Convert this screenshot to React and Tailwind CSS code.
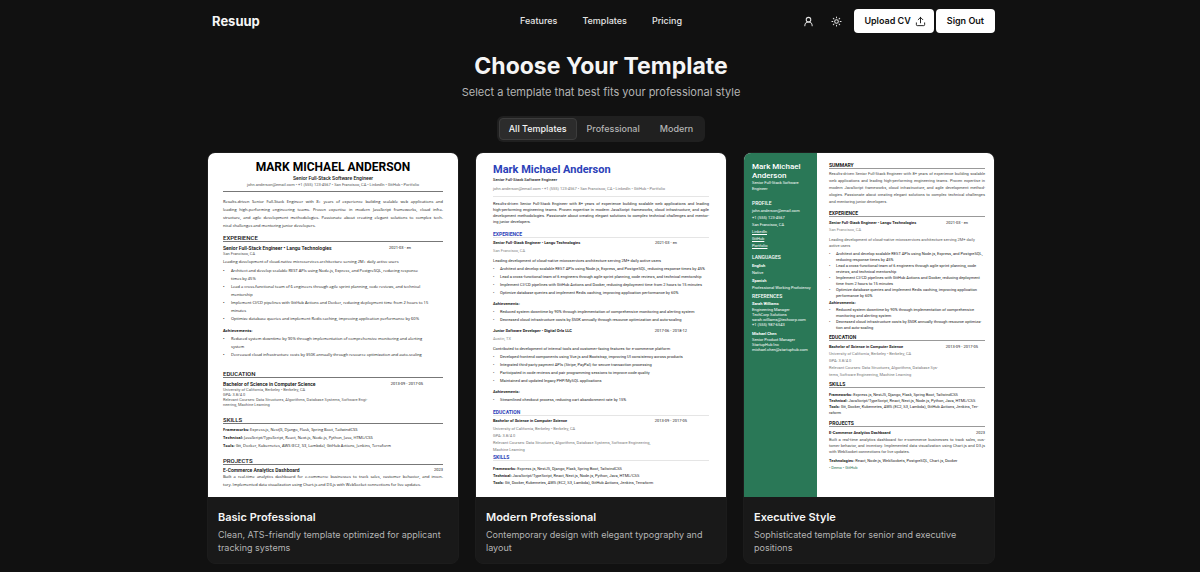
import { useState } from 'react';
import { Sun, Upload, UserRound } from 'lucide-react';

const tabs = ['All Templates', 'Professional', 'Modern'];

const skills = {
  frameworks: 'Express.js, NestJS, Django, Flask, Spring Boot, TailwindCSS',
  technical: 'JavaScript/TypeScript, React, Next.js, Node.js, Python, Java, HTML/CSS',
  tools: 'Git, Docker, Kubernetes, AWS (EC2, S3, Lambda), GitHub Actions, Jenkins, Terraform',
};

// one printed line per entry, every line but the last is set to the full measure
function Paragraph({ lines, className }) {
  return (
    <p className={className}>
      {lines.map((line, i) => (
        <span key={line} className={i < lines.length - 1 ? 'block whitespace-nowrap [text-align-last:justify]' : 'block whitespace-nowrap'}>
          {line}
        </span>
      ))}
    </p>
  );
}

function Lines({ lines, className }) {
  return (
    <div className={className}>
      {lines.map((line) => (
        <p key={line} className="whitespace-nowrap">{line}</p>
      ))}
    </div>
  );
}

function Bullets({ items, className, gap = 'w-[7px]' }) {
  return (
    <ul className={className}>
      {items.map((item) => (
        <li key={item[0]} className="flex">
          <span className={`shrink-0 ${gap}`}>•</span>
          <Lines lines={item} />
        </li>
      ))}
    </ul>
  );
}

function Skill({ label, children }) {
  return (
    <p className="whitespace-nowrap">
      <b className="font-bold">{label}:</b> {children}
    </p>
  );
}

function Entry({ title, date, className, titleClass = 'font-bold', right = 'pr-8' }) {
  return (
    <div className={`flex justify-between whitespace-nowrap font-['Roboto',sans-serif] ${className}`}>
      <h4 className={titleClass}>{title}</h4>
      <span className={right}>{date}</span>
    </div>
  );
}

function BasicResume() {
  const heading = "border-b border-[#777] text-[6px] leading-[6px] font-medium font-['Roboto',sans-serif]";
  const entryTitle = 'text-[5px] font-semibold';
  const muted = "text-[#555] font-['Roboto',sans-serif]";
  return (
    <div className="px-[15px] pt-[7px] text-[4px] leading-[8px] text-[#111] font-['Open_Sans',sans-serif]">
      <div className="border-b border-[#777] pb-[3px] text-center whitespace-nowrap font-['Roboto',sans-serif]">
        <h3 className="text-[12px] leading-[14px] font-bold text-black">MARK MICHAEL ANDERSON</h3>
        <p className="text-[5px] font-medium">Senior Full-Stack Software Engineer</p>
        <p className="leading-[6px] text-[#555]">john.anderson@email.com • +1 (555) 123-4567 • San Francisco, CA • LinkedIn • GitHub • Portfolio</p>
      </div>
      <Paragraph
        className="mt-[6px]"
        lines={[
          'Results-driven Senior Full-Stack Engineer with 8+ years of experience building scalable web applications and',
          'leading high-performing engineering teams. Proven expertise in modern JavaScript frameworks, cloud infra-',
          'structure, and agile development methodologies. Passionate about creating elegant solutions to complex tech-',
          'nical challenges and mentoring junior developers.',
        ]}
      />
      <h4 className={`mt-[5px] ${heading}`}>EXPERIENCE</h4>
      <Entry className="mt-[3px] leading-[6px]" titleClass={entryTitle} title="Senior Full-Stack Engineer • Langu Technologies" date="2021-03 - en" />
      <p className={`leading-[6px] ${muted}`}>San Francisco, CA</p>
      <p className="mt-px whitespace-nowrap">Leading development of cloud-native microservices architecture serving 2M+ daily active users</p>
      <Bullets
        className="mt-px"
        gap="w-2"
        items={[
          ['Architect and develop scalable REST APIs using Node.js, Express, and PostgreSQL, reducing response', 'times by 45%'],
          ['Lead a cross-functional team of 6 engineers through agile sprint planning, code reviews, and technical', 'mentorship'],
          ['Implement CI/CD pipelines with GitHub Actions and Docker, reducing deployment time from 2 hours to 15', 'minutes'],
          ['Optimize database queries and implement Redis caching, improving application performance by 60%'],
        ]}
      />
      <p className="mt-1 font-bold">Achievements:</p>
      <Bullets
        gap="w-2"
        items={[
          ['Reduced system downtime by 90% through implementation of comprehensive monitoring and alerting', 'system'],
          ['Decreased cloud infrastructure costs by $50K annually through resource optimization and auto-scaling'],
        ]}
      />
      <h4 className={`mt-3 ${heading}`}>EDUCATION</h4>
      <Entry className="mt-[3px] leading-[6px]" titleClass={entryTitle} right="pr-5" title="Bachelor of Science in Computer Science" date="2013-09 - 2017-05" />
      <Lines
        className={`leading-[5px] ${muted}`}
        lines={[
          'University of California, Berkeley • Berkeley, CA',
          'GPA: 3.8/4.0',
          'Relevant Courses: Data Structures, Algorithms, Database Systems, Software Engi-',
          'neering, Machine Learning',
        ]}
      />
      <h4 className={`mt-[10px] ${heading}`}>SKILLS</h4>
      <div className="mt-0.5">
        <Skill label="Frameworks">{skills.frameworks}</Skill>
        <Skill label="Technical">{skills.technical}</Skill>
        <Skill label="Tools">{skills.tools}</Skill>
      </div>
      <h4 className={`mt-2 ${heading}`}>PROJECTS</h4>
      <Entry className="mt-0.5 leading-[6px]" titleClass={entryTitle} right="" title="E-Commerce Analytics Dashboard" date="2023" />
      <Paragraph
        lines={[
          'Built a real-time analytics dashboard for e-commerce businesses to track sales, customer behavior, and inven-',
          'tory. Implemented data visualization using Chart.js and D3.js with WebSocket connections for live updates.',
        ]}
      />
    </div>
  );
}

function ModernResume() {
  const heading = 'border-b border-[#e5e5e5] text-[5px] leading-[6px] font-bold text-[#2b41b8]';
  return (
    <div className="px-[17px] pt-[10px] text-[4px] leading-[8px] text-[#222]">
      <div className="border-b border-[#e5e5e5] pb-[3px] whitespace-nowrap">
        <h3 className="text-[11px] leading-[13px] font-bold text-[#2b41b8]">Mark Michael Anderson</h3>
        <p className="leading-[7px] font-medium">Senior Full-Stack Software Engineer</p>
        <p className="mt-0.5 text-[#777]">john.anderson@email.com • +1 (555) 123-4567 • San Francisco, CA • LinkedIn • GitHub • Portfolio</p>
      </div>
      <Paragraph
        className="mt-1 leading-[6px]"
        lines={[
          'Results-driven Senior Full-Stack Engineer with 8+ years of experience building scalable web applications and leading',
          'high-performing engineering teams. Proven expertise in modern JavaScript frameworks, cloud infrastructure, and agile',
          'development methodologies. Passionate about creating elegant solutions to complex technical challenges and mentor-',
          'ing junior developers.',
        ]}
      />
      <h4 className={`mt-[6px] ${heading}`}>EXPERIENCE</h4>
      <Entry className="mt-px" title="Senior Full-Stack Engineer • Langu Technologies" date="2021-03 - en" />
      <p className="text-[#888]">San Francisco, CA</p>
      <p className="mt-0.5 whitespace-nowrap">Leading development of cloud-native microservices architecture serving 2M+ daily active users</p>
      <Bullets
        items={[
          ['Architect and develop scalable REST APIs using Node.js, Express, and PostgreSQL, reducing response times by 45%'],
          ['Lead a cross-functional team of 6 engineers through agile sprint planning, code reviews, and technical mentorship'],
          ['Implement CI/CD pipelines with GitHub Actions and Docker, reducing deployment time from 2 hours to 15 minutes'],
          ['Optimize database queries and implement Redis caching, improving application performance by 60%'],
        ]}
      />
      <p className="mt-[3px] font-bold">Achievements:</p>
      <Bullets
        items={[
          ['Reduced system downtime by 90% through implementation of comprehensive monitoring and alerting system'],
          ['Decreased cloud infrastructure costs by $50K annually through resource optimization and auto-scaling'],
        ]}
      />
      <Entry className="mt-[3px]" right="pr-[22px]" title="Junior Software Developer • Digital Orla LLC" date="2017-06 - 2018-12" />
      <p className="text-[#888]">Austin, TX</p>
      <p className="mt-0.5 whitespace-nowrap">Contributed to development of internal tools and customer-facing features for e-commerce platform</p>
      <Bullets
        items={[
          ['Developed frontend components using Vue.js and Bootstrap, improving UI consistency across products'],
          ['Integrated third-party payment APIs (Stripe, PayPal) for secure transaction processing'],
          ['Participated in code reviews and pair programming sessions to improve code quality'],
          ['Maintained and updated legacy PHP/MySQL applications'],
        ]}
      />
      <p className="mt-[3px] font-bold">Achievements:</p>
      <Bullets items={[['Streamlined checkout process, reducing cart abandonment rate by 15%']]} />
      <h4 className={`mt-[5px] ${heading}`}>EDUCATION</h4>
      <Entry className="mt-px" right="pr-[22px]" title="Bachelor of Science in Computer Science" date="2013-09 - 2017-05" />
      <Lines
        className="leading-[7px] text-[#777]"
        lines={[
          'University of California, Berkeley • Berkeley, CA',
          'GPA: 3.8/4.0',
          'Relevant Courses: Data Structures, Algorithms, Database Systems, Software Engineering,',
          'Machine Learning',
        ]}
      />
      <h4 className={`mt-px ${heading}`}>SKILLS</h4>
      <div className="mt-1 leading-[7px]">
        <Skill label="Frameworks">{skills.frameworks}</Skill>
        <Skill label="Technical">{skills.technical}</Skill>
        <Skill label="Tools">{skills.tools}</Skill>
      </div>
    </div>
  );
}

function ExecutiveResume() {
  const heading = 'border-b border-[#999] text-[5px] leading-[6px] font-bold';
  const side = 'text-[5px] leading-[8px] font-medium';
  return (
    <div className="flex h-full text-[4px]">
      <div className="w-[73px] shrink-0 bg-[#2a7857] pt-[9px] pl-2 leading-[7px] whitespace-nowrap text-white">
        <h3 className="text-[8px] leading-[9px] font-medium">Mark Michael<br />Anderson</h3>
        <p className="leading-[6px]">Senior Full-Stack Software<br />Engineer</p>
        <h4 className={`mt-[7px] ${side}`}>PROFILE</h4>
        <Lines lines={['john.anderson@email.com', '+1 (555) 123-4567', 'San Francisco, CA']} />
        <p className="underline">LinkedIn</p>
        <p className="underline">GitHub</p>
        <p className="underline">Portfolio</p>
        <h4 className={`mt-1 ${side}`}>LANGUAGES</h4>
        <p className="mt-px font-bold">English</p>
        <p>Native</p>
        <p className="mt-px font-bold">Spanish</p>
        <p>Professional Working Proficiency</p>
        <h4 className={`mt-px ${side}`}>REFERENCES</h4>
        <p className="font-bold">Sarah Williams</p>
        <Lines className="leading-[5px]" lines={['Engineering Manager', 'TechCorp Solutions', 'sarah.williams@techcorp.com', '+1 (555) 987-6543']} />
        <p className="mt-[3px] font-bold">Michael Chen</p>
        <Lines className="leading-[5px]" lines={['Senior Product Manager', 'StartupHub Inc', 'michael.chen@startuphub.com']} />
      </div>
      <div className="min-w-0 grow pt-[9px] pr-[9px] pl-3 leading-[7px] text-[#222]">
        <h4 className={heading}>SUMMARY</h4>
        <Paragraph
          className="mt-px text-[#444]"
          lines={[
            'Results-driven Senior Full-Stack Engineer with 8+ years of experience building scalable',
            'web applications and leading high-performing engineering teams. Proven expertise in',
            'modern JavaScript frameworks, cloud infrastructure, and agile development method-',
            'ologies. Passionate about creating elegant solutions to complex technical challenges',
            'and mentoring junior developers.',
          ]}
        />
        <h4 className={`mt-[5px] ${heading}`}>EXPERIENCE</h4>
        <Entry className="mt-0.5" right="pr-[17px]" title="Senior Full-Stack Engineer • Langu Technologies" date="2021-03 - en" />
        <p className="text-[#888]">San Francisco, CA</p>
        <Lines className="mt-1 leading-[6px] text-[#555]" lines={['Leading development of cloud-native microservices architecture serving 2M+ daily', 'active users']} />
        <Bullets
          className="mt-0.5 leading-[6px]"
          items={[
            ['Architect and develop scalable REST APIs using Node.js, Express, and PostgreSQL,', 'reducing response times by 45%'],
            ['Lead a cross-functional team of 6 engineers through agile sprint planning, code', 'reviews, and technical mentorship'],
            ['Implement CI/CD pipelines with GitHub Actions and Docker, reducing deployment', 'time from 2 hours to 15 minutes'],
            ['Optimize database queries and implement Redis caching, improving application', 'performance by 60%'],
          ]}
        />
        <p className="font-bold">Achievements:</p>
        <Bullets
          className="mt-px leading-[6px]"
          items={[
            ['Reduced system downtime by 90% through implementation of comprehensive', 'monitoring and alerting system'],
            ['Decreased cloud infrastructure costs by $50K annually through resource optimiza-', 'tion and auto-scaling'],
          ]}
        />
        <h4 className={`mt-[3px] ${heading}`}>EDUCATION</h4>
        <Entry className="mt-0.5" right="pr-[7px]" title="Bachelor of Science in Computer Science" date="2013-09 - 2017-05" />
        <Lines
          className="text-[#777]"
          lines={[
            'University of California, Berkeley • Berkeley, CA',
            'GPA: 3.8/4.0',
            'Relevant Courses: Data Structures, Algorithms, Database Sys-',
            'tems, Software Engineering, Machine Learning',
          ]}
        />
        <h4 className={`mt-[3px] ${heading}`}>SKILLS</h4>
        <div className="mt-1 leading-[6px]">
          <Skill label="Frameworks">{skills.frameworks}</Skill>
          <Skill label="Technical">{skills.technical}</Skill>
          <Skill label="Tools">Git, Docker, Kubernetes, AWS (EC2, S3, Lambda), GitHub Actions, Jenkins, Ter-<br />raform</Skill>
        </div>
        <h4 className={`mt-1 ${heading}`}>PROJECTS</h4>
        <Entry className="mt-0.5" right="" title="E-Commerce Analytics Dashboard" date="2023" />
        <Paragraph
          className="mt-px leading-[6px] text-[#444]"
          lines={[
            'Built a real-time analytics dashboard for e-commerce businesses to track sales, cus-',
            'tomer behavior, and inventory. Implemented data visualization using Chart.js and D3.js',
            'with WebSocket connections for live updates.',
          ]}
        />
        <div className="mt-0.5">
          <Skill label="Technologies">React, Node.js, WebSockets, PostgreSQL, Chart.js, Docker</Skill>
        </div>
        <p className="text-[#2a7857]">• Demo • GitHub</p>
      </div>
    </div>
  );
}

const templates = [
  { name: 'Basic Professional', description: 'Clean, ATS-friendly template optimized for applicant tracking systems', kind: 'Professional', Preview: BasicResume },
  { name: 'Modern Professional', description: 'Contemporary design with elegant typography and layout', kind: 'Modern', Preview: ModernResume },
  { name: 'Executive Style', description: 'Sophisticated template for senior and executive positions', kind: 'Professional', Preview: ExecutiveResume },
];

function Header() {
  return (
    <header className="grid grid-cols-[1fr_auto_1fr] items-center pt-[9px]">
      <a href="#home" className="pl-[5px] text-[13px] leading-6 font-bold text-[#f5f5f5]">Resuup</a>
      <nav className="flex gap-[25px] text-[9px] font-medium text-[#e5e5e5]">
        <a href="#features">Features</a>
        <a href="#templates">Templates</a>
        <a href="#pricing">Pricing</a>
      </nav>
      <div className="flex items-center justify-end text-[#e5e5e5]">
        <button aria-label="Account" className="mr-[17px]"><UserRound size={11} strokeWidth={2.2} /></button>
        <button aria-label="Toggle theme" className="mr-3"><Sun size={11} strokeWidth={2.2} /></button>
        <button className="flex h-6 items-center gap-1 rounded bg-white pr-2 pl-[10px] text-[9px] font-semibold text-[#111]">
          Upload CV
          <Upload size={11} strokeWidth={2} />
        </button>
        <button className="ml-0.5 h-6 rounded bg-white px-[11px] text-[9px] font-semibold text-[#111]">Sign Out</button>
      </div>
    </header>
  );
}

export default function App() {
  const [tab, setTab] = useState('All Templates');
  const shown = templates.filter((t) => tab === 'All Templates' || t.kind === tab);

  return (
    <div className="min-h-screen bg-[#111] pb-2 pl-0.5 font-['Inter',sans-serif]">
      <div className="mx-auto w-full max-w-[788px]">
        <Header />
        <main>
          <div className="mt-[17px] text-center">
            <h1 className="text-[23px] leading-8 font-bold text-[#f5f5f5]">Choose Your Template</h1>
            <p className="mt-0.5 text-[11px] leading-4 text-[#b4b4b4]">Select a template that best fits your professional style</p>
          </div>
          <div className="mt-4 flex justify-center">
            <div role="tablist" className="flex rounded-md bg-[#202020] p-0.5 text-[9px] font-medium">
              {tabs.map((t) => (
                <button
                  key={t}
                  role="tab"
                  aria-selected={t === tab}
                  onClick={() => setTab(t)}
                  className={
                    t === tab
                      ? 'h-[22px] rounded border border-[#3c3c3c] bg-[#2c2c2c] px-[9px] text-[#f5f5f5]'
                      : 'h-[22px] rounded border border-transparent px-[9px] text-[#b4b4b4]'
                  }
                >
                  {t}
                </button>
              ))}
            </div>
          </div>
          <div className="mt-[10px] grid grid-cols-3 gap-4">
            {shown.map(({ name, description, Preview }) => (
              <article key={name} className="overflow-hidden rounded-lg border border-[#1c1c1c] bg-[#191919]">
                <div className="aspect-[250/344] overflow-hidden bg-white font-['Roboto',sans-serif]">
                  <Preview />
                </div>
                <div className="px-[10px] pt-3 pb-[9px]">
                  <h2 className="text-[11px] leading-4 font-semibold text-[#f5f5f5]">{name}</h2>
                  <p className="mt-[3px] text-[9px] leading-[13px] text-[#b4b4b4]">{description}</p>
                </div>
              </article>
            ))}
          </div>
        </main>
      </div>
    </div>
  );
}
